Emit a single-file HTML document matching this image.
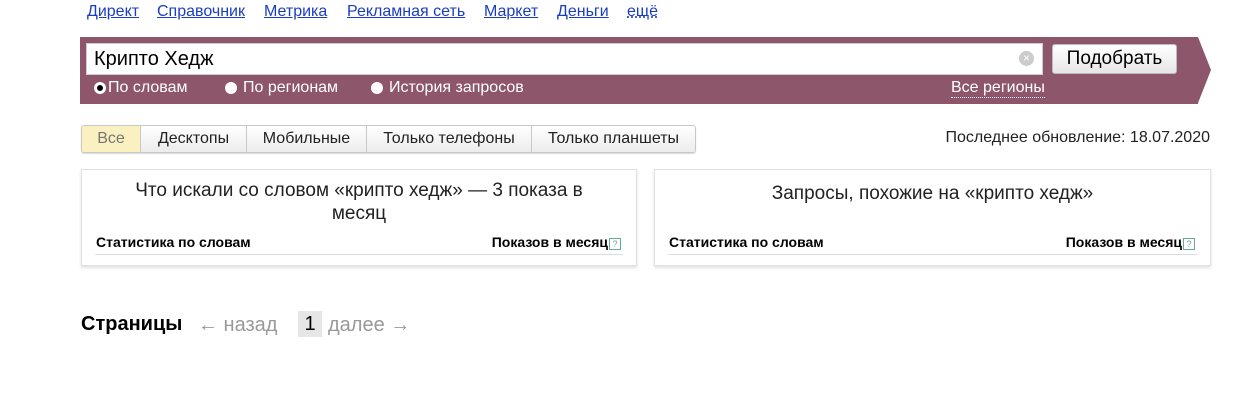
<!DOCTYPE html>
<html><head><meta charset="utf-8"><style>
*{box-sizing:border-box;margin:0;padding:0}
body{width:1255px;height:413px;background:#fff;font-family:"Liberation Sans",Arial,sans-serif;position:relative;overflow:hidden;color:#000}
.a{position:absolute;white-space:nowrap}
.nv{position:absolute;top:3px;color:#1a3dc1;text-decoration:underline;font-size:16px;white-space:nowrap}
.band{position:absolute;left:80px;top:37px;width:1118px;height:67px;background:#8e566b}
.arrow{position:absolute;left:1198px;top:37px;width:0;height:0;border-top:33.5px solid transparent;border-bottom:33.5px solid transparent;border-left:13px solid #8e566b}
.inp{position:absolute;left:86px;top:43px;width:957px;height:32px;background:#fff;border:1px solid #ccc;font-size:20px;padding:4px 7px}
.btn{position:absolute;left:1052px;top:44px;width:125px;height:30px;background:linear-gradient(#fff,#e6e6e6);border:1px solid #bbb;border-radius:3px;font-size:19px;text-align:center;line-height:28px}
.rad{color:#fff;font-size:16px;top:79px}
.dot{position:absolute;top:82px;width:12px;height:12px;border-radius:50%;background:#fff}
.dot.on::after{content:"";position:absolute;left:3px;top:3px;width:6px;height:6px;border-radius:50%;background:#000}
.tabs{position:absolute;left:81px;top:125px;height:28px;display:flex;border:1px solid #c8c8c8;border-radius:3px;overflow:hidden;box-shadow:0 1px 1px rgba(0,0,0,.15)}
.tabs div{font-size:16px;text-align:center;line-height:26px;background:linear-gradient(#fff,#ececec);border-left:1px solid #c8c8c8;color:#222}
.tabs div:first-child{border-left:none;background:#fbf0c0;color:#777}
.card{position:absolute;top:169px;height:97px;border:1px solid #e0e0e0;box-shadow:0 2px 3px rgba(0,0,0,.12);background:#fff}
.card .t{position:absolute;left:0;right:0;top:9px;text-align:center;font-size:19px;line-height:23px;color:#222}
.card .s{position:absolute;top:64px;font-size:14px;font-weight:bold}
.card .ln{position:absolute;left:13px;right:13px;top:84px;border-top:1px solid #ddd}
.q{display:inline-block;width:12px;height:12px;border:1px solid #6a9;color:#6a9;font-size:9px;line-height:10px;text-align:center;font-weight:normal;vertical-align:0;margin-left:1px}
</style></head><body>
<span class="nv" style="left:87px">Директ</span>
<span class="nv" style="left:157px">Справочник</span>
<span class="nv" style="left:264px">Метрика</span>
<span class="nv" style="left:347px">Рекламная сеть</span>
<span class="nv" style="left:484px">Маркет</span>
<span class="nv" style="left:557px">Деньги</span>
<span class="nv" style="left:627px;text-decoration:underline dotted">ещё</span>
<div class="band"></div><div class="arrow"></div>
<div class="inp">Крипто Хедж</div>
<div class="a" style="left:1019px;top:51px;width:15px;height:15px;border-radius:50%;background:#ccc;color:#fff;font-size:12px;text-align:center;line-height:15px">×</div>
<div class="btn">Подобрать</div>
<div class="dot on" style="left:94px"></div><div class="a rad" style="left:108px">По словам</div>
<div class="dot" style="left:225px"></div><div class="a rad" style="left:243px">По регионам</div>
<div class="dot" style="left:371px"></div><div class="a rad" style="left:389px">История запросов</div>
<div class="a rad" style="left:951px;border-bottom:1px dotted #fff;line-height:18px">Все регионы</div>
<div class="tabs"><div style="width:58px">Все</div><div style="width:106px">Десктопы</div><div style="width:120px">Мобильные</div><div style="width:165px">Только телефоны</div><div style="width:164px">Только планшеты</div></div>
<div class="a" style="right:45px;top:129px;font-size:16px;color:#222">Последнее обновление: 18.07.2020</div>
<div class="card" style="left:81px;width:556px"><div class="t">Что искали со словом «крипто хедж» — 3 показа в<br>месяц</div>
<div class="s" style="left:14px">Статистика по словам</div><div class="s" style="right:15px">Показов в месяц<span class="q">?</span></div><div class="ln"></div></div>
<div class="card" style="left:654px;width:557px"><div class="t" style="top:12px">Запросы, похожие на «крипто хедж»</div>
<div class="s" style="left:14px">Статистика по словам</div><div class="s" style="right:15px">Показов в месяц<span class="q">?</span></div><div class="ln"></div></div>
<div class="a" style="left:81px;top:313px;font-size:20px;font-weight:bold">Страницы</div>
<div class="a" style="left:198px;top:314px;font-size:20px;color:#999">← назад</div>
<div class="a" style="left:298px;top:311px;width:24px;height:26px;background:#e6e6e6;font-size:20px;text-align:center;line-height:26px">1</div>
<div class="a" style="left:328px;top:314px;font-size:20px;color:#999">далее →</div>
</body></html>
